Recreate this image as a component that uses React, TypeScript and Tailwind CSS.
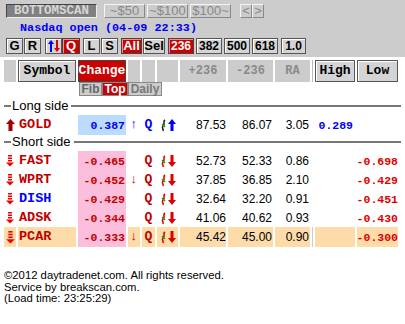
import React from "react";

const mono = "font-['Liberation_Mono','DejaVu_Sans_Mono',monospace]";
const sans = "font-['Liberation_Sans',Arial,sans-serif]";
const cols =
  "grid grid-cols-[12px_58px_48px_12px_13px_21px_46px_45px_35px_1px_40px_41px] gap-x-[2px] ml-[4px]";

const raised =
  "border border-[#555] shadow-[inset_1px_1px_0_#fff] bg-[#d4d4d4] text-black flex items-center justify-center";
const redBtn =
  "border border-[#444] shadow-[inset_1px_1px_0_#f88] bg-[#cc0000] text-white flex items-center justify-center";

function BarsDown({ big }: { big?: boolean }) {
  return (
    <svg width={big ? 9 : 8} height={big ? 13 : 12} viewBox="0 0 8 12">
      <rect x="2" y="0" width="4" height="1.5" fill="#e00" />
      <rect x="2" y="2.5" width="4" height="1.5" fill="#e00" />
      <rect x="2" y="5" width="4" height="1.5" fill="#e00" />
      <polygon points="0,7.5 8,7.5 4,11.5" fill="#e00" />
    </svg>
  );
}

function ThickUp() {
  return (
    <svg width="9" height="12" viewBox="0 0 9 12">
      <polygon points="4.5,0 9,5 6.5,5 6.5,12 2.5,12 2.5,5 0,5" fill="#a00000" />
    </svg>
  );
}

function UpDown() {
  return (
    <svg width="12" height="12" viewBox="0 0 12 12">
      <polygon points="3,0 6,4 4,4 4,12 2,12 2,4 0,4" fill="#0000ff" />
      <polygon points="8,0 10,0 10,8 12,8 9,12 6,8 8,8" fill="#e00000" />
    </svg>
  );
}

function Squiggle({ color }: { color: string }) {
  return (
    <svg width="7" height="13" viewBox="0 0 7 13">
      <path d="M5 1 C2 3, 6 5, 3 7 C1 9, 4 10, 3 12" stroke={color} strokeWidth="1.6" fill="none" />
      <path d="M2 5 L5 8" stroke="#0a0" strokeWidth="1.4" />
    </svg>
  );
}

function BigArrow({ up }: { up?: boolean }) {
  const fill = up ? "#0000ff" : "#e00000";
  return (
    <svg width="8" height="12" viewBox="0 0 8 12">
      {up ? (
        <polygon points="4,0 8,5 5.5,5 5.5,12 2.5,12 2.5,5 0,5" fill={fill} />
      ) : (
        <polygon points="2.5,0 5.5,0 5.5,7 8,7 4,12 0,7 2.5,7" fill={fill} />
      )}
    </svg>
  );
}

type Row = {
  sym: string;
  symColor: string;
  chg: string;
  arrow: boolean;
  a: string;
  b: string;
  ra: string;
  low: string;
  hl?: boolean;
};

const shorts: Row[] = [
  { sym: "FAST", symColor: "text-[#c00000]", chg: "-0.465", arrow: false, a: "52.73", b: "52.33", ra: "0.86", low: "-0.698" },
  { sym: "WPRT", symColor: "text-[#c00000]", chg: "-0.452", arrow: true, a: "37.85", b: "36.85", ra: "2.10", low: "-0.429" },
  { sym: "DISH", symColor: "text-[#0000ff]", chg: "-0.429", arrow: false, a: "32.64", b: "32.20", ra: "0.91", low: "-0.451" },
  { sym: "ADSK", symColor: "text-[#c00000]", chg: "-0.344", arrow: false, a: "41.06", b: "40.62", ra: "0.93", low: "-0.430" },
  { sym: "PCAR", symColor: "text-[#c00000]", chg: "-0.333", arrow: true, a: "45.42", b: "45.00", ra: "0.90", low: "-0.300", hl: true },
];

function SideLabel({ text }: { text: string }) {
  return (
    <div className={`flex items-center h-[14px] ml-[4px] mr-[4px] ${sans} text-[13px] text-black`}>
      <div className="w-[7px] h-[2px] bg-[#777]" />
      <span className="px-[1px] leading-[14px]">{text}</span>
      <div className="flex-1 h-[2px] bg-[#777] ml-[2px]" />
    </div>
  );
}

function ShortRow({ r }: { r: Row }) {
  const bg = r.hl ? "bg-[#fddcaa]" : "";
  const num = `${sans} text-[12px] text-black flex items-center justify-end`;
  return (
    <div className={`${cols} h-[17px] mb-[2px]`}>
      <div className={`${bg} flex items-center justify-center`}>
        <BarsDown big={r.hl} />
      </div>
      <div className={`${bg} ${mono} font-bold text-[13.5px] ${r.symColor} flex items-center pl-[1px]`}>{r.sym}</div>
      <div className={`bg-[#fbbedc] ${mono} font-bold text-[11.5px] text-[#c00000] flex items-center justify-end pr-[1px]`}>{r.chg}</div>
      <div className={`${bg} ${mono} font-bold text-[13px] text-[#e00000] flex items-center justify-center`}>{r.arrow ? "↓" : ""}</div>
      <div className={`${bg} ${mono} font-bold text-[13px] text-[#c00000] flex items-center justify-center`}>Q</div>
      <div className={`${bg} flex items-center justify-center gap-[1px]`}>
        <Squiggle color="#e00000" />
        <BigArrow />
      </div>
      <div className={`${bg} ${num}`}>{r.a}</div>
      <div className={`${bg} ${num} pr-[1px]`}>{r.b}</div>
      <div className={`${bg} ${num} pr-[1px]`}>{r.ra}</div>
      <div className={r.hl ? "bg-[#ccc]" : ""} />
      <div className={bg} />
      <div className={`${bg} ${mono} font-bold text-[11.5px] text-[#e00000] flex items-center justify-end`}>{r.low}</div>
    </div>
  );
}

export default function App() {
  const topBtn =
    "h-[14px] flex items-center justify-center border border-t-[#f4f4f4] border-l-[#f4f4f4] border-b-[#888] border-r-[#888] text-[#888] text-[13px]";
  const b = `${sans} font-bold`;
  return (
    <div className={`w-[405px] h-[324px] bg-white ${sans} overflow-hidden`}>
      {/* top panel */}
      <div className="bg-[#ccc] h-[57px] pt-[4px] pl-[6px]">
        <div className="flex items-center h-[14px]">
          <div className={`w-[91px] h-[14px] bg-[#808080] border border-t-[#444] border-l-[#444] border-b-[#eee] border-r-[#eee] text-[#d6d6d6] font-bold text-[12.5px] ${mono} flex items-center justify-center`}>
            BOTTOMSCAN
          </div>
          <div className="flex gap-[2px] ml-[7px]">
            <div className={`${topBtn} w-[41px]`}>~$50</div>
            <div className={`${topBtn} w-[41px]`}>~$100</div>
            <div className={`${topBtn} w-[41px]`}>$100~</div>
          </div>
          <div className="flex ml-[9px]">
            <div className={`${topBtn} w-[12px] text-[12px]`}>&lt;</div>
            <div className={`${topBtn} w-[12px] text-[12px]`}>&gt;</div>
          </div>
        </div>
        <div className={`mt-[3px] ml-[14px] h-[14px] leading-[14px] text-[#0000ff] font-bold text-[11.8px] ${mono}`}>
          Nasdaq open (04-09 22:33)
        </div>
        <div className={`flex items-center mt-[3px] h-[16px] ${b} text-[13px]`}>
          <div className="flex gap-[1px]">
            <div className={`${raised} w-[17px] h-[16px]`}>G</div>
            <div className={`${raised} w-[17px] h-[16px]`}>R</div>
          </div>
          <div className="flex ml-[4px]">
            <div className={`${raised} w-[17px] h-[16px]`}>
              <UpDown />
            </div>
            <div className={`${redBtn} w-[18px] h-[16px]`}>Q</div>
          </div>
          <div className="flex gap-[1px] ml-[3px]">
            <div className={`${raised} w-[17px] h-[16px]`}>L</div>
            <div className={`${raised} w-[17px] h-[16px]`}>S</div>
          </div>
          <div className="flex gap-[1px] ml-[3px]">
            <div className={`${redBtn} w-[21px] h-[16px]`}>All</div>
            <div className={`${raised} w-[22px] h-[16px]`}>Sel</div>
          </div>
          <div className={`flex gap-[2px] ml-[3px] text-[12px]`}>
            <div className={`${redBtn} w-[26px] h-[16px]`}>236</div>
            <div className={`${raised} w-[26px] h-[16px]`}>382</div>
            <div className={`${raised} w-[26px] h-[16px]`}>500</div>
            <div className={`${raised} w-[26px] h-[16px]`}>618</div>
          </div>
          <div className={`${raised} w-[25px] h-[16px] ml-[3px] text-[12px]`}>1.0</div>
        </div>
      </div>

      {/* column header */}
      <div className={`${cols} h-[18px] mt-[3px] ${mono} font-bold text-[13px]`}>
        <div className="bg-[#ccc]" />
        <div className={raised}>Symbol</div>
        <div className="bg-[#cc0000] border border-[#444] text-white flex items-center justify-center">Change</div>
        <div className="bg-[#ccc]" />
        <div className="bg-[#ccc]" />
        <div className="bg-[#ccc]" />
        <div className="bg-[#ccc] text-[#8a8a8a] text-[12px] flex items-center justify-center">+236</div>
        <div className="bg-[#ccc] text-[#8a8a8a] text-[12px] flex items-center justify-center">-236</div>
        <div className="bg-[#ccc] text-[#8a8a8a] text-[12px] flex items-center justify-center">RA</div>
        <div className="bg-[#bbb]" />
        <div className={raised}>High</div>
        <div className={raised}>Low</div>
      </div>

      {/* sub tabs */}
      <div className={`flex ml-[79px] mt-[4px] h-[14px] ${sans} font-bold text-[12px]`}>
        <div className="w-[23px] bg-[#ccc] border border-[#888] text-[#666] flex items-center justify-center">Fib</div>
        <div className="w-[26px] bg-[#cc0000] border border-[#888] text-white flex items-center justify-center">Top</div>
        <div className="w-[34px] bg-[#ccc] border border-[#888] text-[#777] flex items-center justify-center">Daily</div>
      </div>

      <div className="mt-[3px]">
        <SideLabel text="Long side" />
      </div>

      {/* long row */}
      <div className={`${cols} h-[18px] mt-[2px]`}>
        <div className="flex items-center justify-center">
          <ThickUp />
        </div>
        <div className={`${mono} font-bold text-[13.5px] text-[#c00000] flex items-center pl-[1px]`}>GOLD</div>
        <div className={`bg-[#bcdcff] ${mono} font-bold text-[11.5px] text-[#0000ff] flex items-center justify-end pr-[1px]`}>0.387</div>
        <div className={`${mono} font-bold text-[13px] text-[#0000ff] flex items-center justify-center`}>↑</div>
        <div className={`${mono} font-bold text-[13px] text-[#0000ff] flex items-center justify-center`}>Q</div>
        <div className="flex items-center justify-center gap-[1px]">
          <Squiggle color="#222" />
          <BigArrow up />
        </div>
        <div className={`${sans} text-[12px] text-black flex items-center justify-end`}>87.53</div>
        <div className={`${sans} text-[12px] text-black flex items-center justify-end pr-[1px]`}>86.07</div>
        <div className={`${sans} text-[12px] text-black flex items-center justify-end pr-[1px]`}>3.05</div>
        <div />
        <div className={`${mono} font-bold text-[11.5px] text-[#0000ff] flex items-center justify-end pr-[2px]`}>0.289</div>
        <div />
      </div>

      <div className="mt-[2px]">
        <SideLabel text="Short side" />
      </div>

      <div className="mt-[2px]">
        {shorts.map((r) => (
          <ShortRow key={r.sym} r={r} />
        ))}
      </div>

      <div className={`mt-[26px] ml-[4px] ${sans} text-[11.3px] leading-[11.5px] text-black`}>
        <div>©2012 daytradenet.com. All rights reserved.</div>
        <div>Service by breakscan.com.</div>
        <div>(Load time: 23:25:29)</div>
      </div>
    </div>
  );
}
